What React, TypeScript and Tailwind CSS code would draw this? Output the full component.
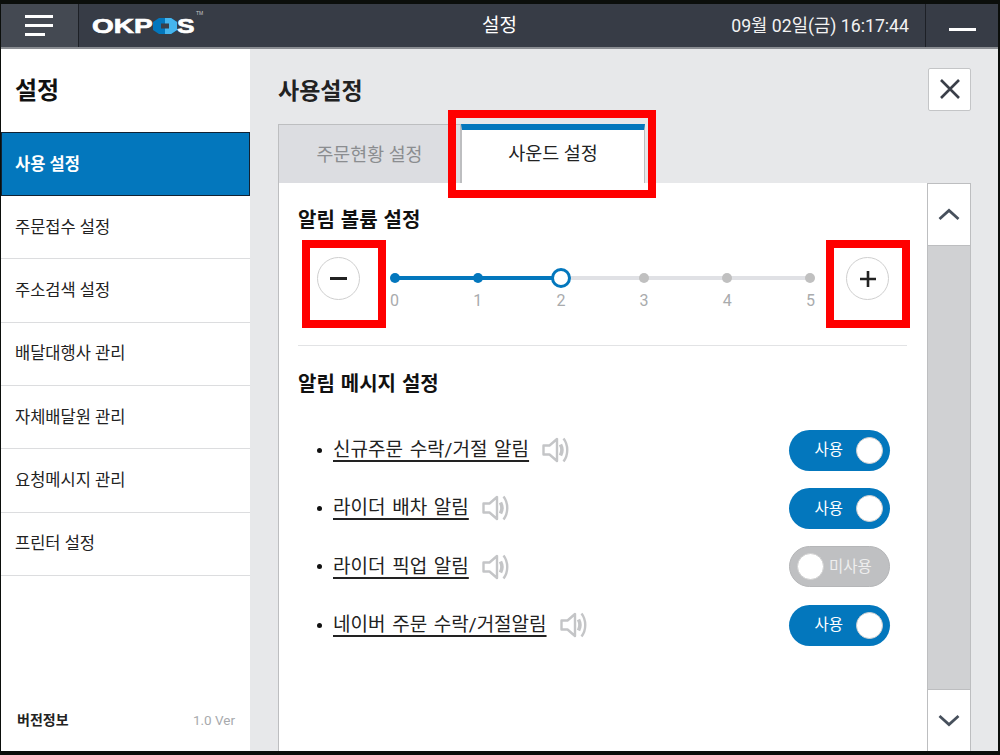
const FONT = { fontFamily: "Roboto, 'Noto Sans CJK KR', sans-serif" };

const menus = ["주문접수 설정", "주소검색 설정", "배달대행사 관리", "자체배달원 관리", "요청메시지 관리", "프린터 설정"];

const alarms = [
  { label: "신규주문 수락/거절 알림", on: true },
  { label: "라이더 배차 알림", on: true },
  { label: "라이더 픽업 알림", on: false },
  { label: "네이버 주문 수락/거절알림", on: true },
];

function Speaker() {
  return (
    <svg width="28" height="28" viewBox="0 0 28 28" fill="none" className="shrink-0">
      <path d="M1.5 9.5h6L15 3v22l-7.5-6.5h-6z" stroke="#c4c5c7" strokeWidth="2.4" strokeLinejoin="round" />
      <path d="M18.5 8.5c1.8 3.4 1.8 7.6 0 11" stroke="#c4c5c7" strokeWidth="3.6" />
      <path d="M21.5 2.5c5 6.5 5 16.500 0 23" stroke="#c4c5c7" strokeWidth="2.4" />
    </svg>
  );
}

function Toggle({ on }: { on: boolean }) {
  if (on) {
    return (
      <div className="w-[101px] h-[41px] rounded-full bg-[#0377bd] flex items-center justify-end pr-[7px] gap-[13px]">
        <span className="text-white text-[15.5px] leading-none pt-[2px]">사용</span>
        <div className="w-[27px] h-[27px] rounded-full bg-white border border-[#d0d0d0]" />
      </div>
    );
  }
  return (
    <div className="w-[101px] h-[41px] rounded-full bg-[#bfc0c2] border border-[#b5b6b8] flex items-center pl-[7px] gap-[5px]">
      <div className="w-[27px] h-[27px] rounded-full bg-white border border-[#d0d0d0]" />
      <span className="text-[#eeeeee] text-[15.5px] leading-none pt-[2px]">미사용</span>
    </div>
  );
}

function VolumeSlider({ value }: { value: number }) {
  return (
    <div className="flex-1 relative h-[46px]">
      <div className="absolute left-[5px] right-[5px] top-[14px] h-[4px] bg-[#e0e1e5]" />
      <div className="absolute left-[5px] top-[14px] h-[4px] bg-[#0377bd]" style={{ width: `calc((100% - 10px) * ${value / 5})` }} />
      <div className="absolute inset-0 flex justify-between">
        {[0, 1, 2, 3, 4, 5].map((n) => (
          <div key={n} className="w-[11px] flex flex-col items-center relative">
            <div className="h-[32px] flex items-center justify-center">
              {n === value ? (
                <div className="w-[20px] h-[20px] shrink-0 rounded-full bg-white border-[3.5px] border-[#0377bd]" />
              ) : (
                <div className={"w-[10px] h-[10px] rounded-full " + (n < value ? "bg-[#0377bd]" : "bg-[#c0c0c0]")} />
              )}
            </div>
            <span className="text-[16px] leading-[14px] text-[#a9abad] mt-[1px]">{n}</span>
          </div>
        ))}
      </div>
    </div>
  );
}

function Logo() {
  return (
    <div className="flex items-center text-white ml-[13px] relative" style={{ fontFamily: "'Liberation Sans', sans-serif" }}>
      <span className="text-[21px] font-bold leading-none [-webkit-text-stroke:0.7px_white] [transform:scaleX(1.33)] origin-left w-[61px]">OKP</span>
      <svg width="24" height="16" viewBox="0 0 24 16" className="shrink-0">
        <path d="M6 0h12l6 4v8l-6 4H6l-6-4V4z" fill="#0377bd" />
        <path d="M12 0h6l6 4v8l-6 4h-6z" fill="#45b5ee" />
        <rect x="8" y="5.500" width="8" height="5" fill="#3a3f49" />
      </svg>
      <span className="text-[21px] font-bold leading-none [-webkit-text-stroke:0.7px_white] [transform:scaleX(1.25)] origin-left w-[18px]">S</span>
      <span className="absolute left-[104px] top-[-4px] text-[5px] leading-none text-[#c8c8c8]">TM</span>
    </div>
  );
}

export default function App() {
  return (
    <div className="w-[1000px] h-[755px] bg-[#0b0e0b] overflow-hidden relative pt-[4px] pl-[1px] pr-[2px] pb-[4px]" style={FONT}>
      <div className="h-full flex flex-col bg-[#e7e8ea]">
        {/* header */}
        <header className="h-[45px] shrink-0 bg-[#373c46] border-b-2 border-[#8a8d92] flex items-center relative">
          <div className="w-[78px] h-full bg-[#444952] border-r border-[#1d2026] flex flex-col justify-center gap-[6px] pl-[24px]">
            <div className="h-[3px] w-[28px] bg-white" />
            <div className="h-[3px] w-[28px] bg-white" />
            <div className="h-[3px] w-[20px] bg-white" />
          </div>
          <Logo />
          <span className="absolute left-[481px] top-[10px] text-white text-[19px] leading-[24px]">설정</span>
          <span className="ml-auto text-[#f2f2f2] text-[17.7px] leading-[24px] mr-[16px]">09월 02일(금) 16:17:44</span>
          <div className="w-[73px] h-full border-l border-[#1d2026] flex items-center justify-center">
            <div className="h-[3px] w-[27px] bg-white mt-[7px]" />
          </div>
        </header>

        <div className="flex-1 flex min-h-0">
          {/* sidebar */}
          <aside className="w-[249px] shrink-0 bg-white flex flex-col">
            <h1 className="h-[83px] shrink-0 flex items-center pl-[14px] pt-[1px] text-[24px] font-bold text-[#111]">설정</h1>
            <div className="h-[64px] shrink-0 bg-[#0377bd] border border-[#123] flex items-center pl-[13px] pt-[2px] text-white font-bold text-[16.500px]">사용 설정</div>
            {menus.map((m) => (
              <div key={m} className="h-[63.33px] shrink-0 border-b border-[#dcdddf] flex items-center pl-[14px] pt-[2px] text-[16.500px] text-[#222]">{m}</div>
            ))}
            <div className="mt-auto h-[62px] flex items-center justify-between pl-[16px] pr-[15px]">
              <span className="text-[14px] font-bold text-[#222]">버전정보</span>
              <span className="text-[13.500px] text-[#a8aaad]">1.0 Ver</span>
            </div>
          </aside>

          {/* content */}
          <main className="flex-1 min-w-0 pl-[28px] pr-[27px] flex flex-col">
            <div className="h-[75px] shrink-0 flex items-center justify-between">
              <h2 className="text-[23px] font-bold text-[#222] mt-[11px]">사용설정</h2>
              <button className="w-[43px] h-[43px] bg-white border border-[#c4c5c7] rounded-[2px] flex items-center justify-center mt-[5px]">
                <svg width="22" height="22" viewBox="0 0 22 22" fill="none">
                  <path d="M2 2l18 18M20 2L2 20" stroke="#3a3f49" strokeWidth="2.6" />
                </svg>
              </button>
            </div>

            <div className="h-[60px] shrink-0 flex">
              <div className="w-[183px] bg-[#dcdde1] border border-[#bdbec0] flex items-center justify-center pt-[2px] text-[18.400px] text-[#8b8d90]">주문현황 설정</div>
              <div className="w-[184px] bg-white border-x border-[#bdbec0] border-t-[6px] border-t-[#0377bd] flex items-center justify-center text-[18.500px] text-[#222] pb-[4px]">사운드 설정</div>
              <div className="flex-1 border-b border-[#bdbec0]" />
            </div>

            <div className="flex-1 min-h-0 flex bg-white border-x border-[#bdbec0] -mt-px">
              <div className="flex-1 min-w-0 pl-[19px] pr-[19px]">
                <h3 className="text-[20px] font-bold text-[#111] leading-[24px] mt-[25px] [word-spacing:1px]">알림 볼륨 설정</h3>
                <div className="flex items-start mt-[25px] pb-[45px] border-b border-[#e2e3e5] mr-[1px]">
                  <div className="w-[43px] h-[43px] rounded-full border border-[#cfcfcf] bg-white flex items-center justify-center ml-[19px] mr-[29px] shrink-0">
                    <div className="w-[17px] h-[3px] bg-[#222]" />
                  </div>
                  <div className="flex-1 mt-[5px] -mb-[8px]">
                    <VolumeSlider value={2} />
                  </div>
                  <div className="w-[43px] h-[43px] rounded-full border border-[#cfcfcf] bg-white flex items-center justify-center ml-[30px] mr-[18px] shrink-0">
                    <svg width="18" height="18" viewBox="0 0 18 18"><path d="M9 1v16M1 9h16" stroke="#222" strokeWidth="2.6" /></svg>
                  </div>
                </div>

                <h3 className="text-[20px] font-bold text-[#111] leading-[24px] mt-[26px] [word-spacing:1px]">알림 메시지 설정</h3>
                <ul className="mt-[25px] flex flex-col">
                  {alarms.map((a) => (
                    <li key={a.label} className="h-[58.3px] flex items-center pl-[19px] pr-[18px]">
                      <span className="w-[5px] h-[5px] rounded-full bg-[#111] mr-[11px] shrink-0" />
                      <span className="text-[19px] text-[#222] underline underline-offset-[4px] decoration-[2px] leading-[24px] [word-spacing:2px]">{a.label}</span>
                      <span className="ml-[13px]"><Speaker /></span>
                      <div className="ml-auto"><Toggle on={a.on} /></div>
                    </li>
                  ))}
                </ul>
              </div>

              {/* scrollbar */}
              <div className="w-[43px] shrink-0 flex flex-col bg-[#d0d1d3] border-l border-[#bdbec0]">
                <div className="h-[63px] bg-white border-y border-[#bdbec0] flex items-center justify-center">
                  <svg width="22" height="13" viewBox="0 0 22 13" fill="none"><path d="M1.5 11L11 2.500l9.500 8.500" stroke="#47505c" strokeWidth="2.8" /></svg>
                </div>
                <div className="flex-1" />
                <div className="h-[62px] bg-white border-t border-[#bdbec0] flex items-center justify-center">
                  <svg width="22" height="13" viewBox="0 0 22 13" fill="none"><path d="M1.5 2L11 10.500 20.500 2" stroke="#47505c" strokeWidth="2.8" /></svg>
                </div>
              </div>
            </div>
          </main>
        </div>
      </div>

      {/* red annotation boxes */}
      <div className="absolute left-[448px] top-[110px] w-[208px] h-[88px] border-[8px] border-[#ff0000]" />
      <div className="absolute left-[302px] top-[240px] w-[84px] h-[88px] border-[8px] border-[#ff0000]" />
      <div className="absolute left-[826px] top-[240px] w-[84px] h-[88px] border-[8px] border-[#ff0000]" />
    </div>
  );
}
